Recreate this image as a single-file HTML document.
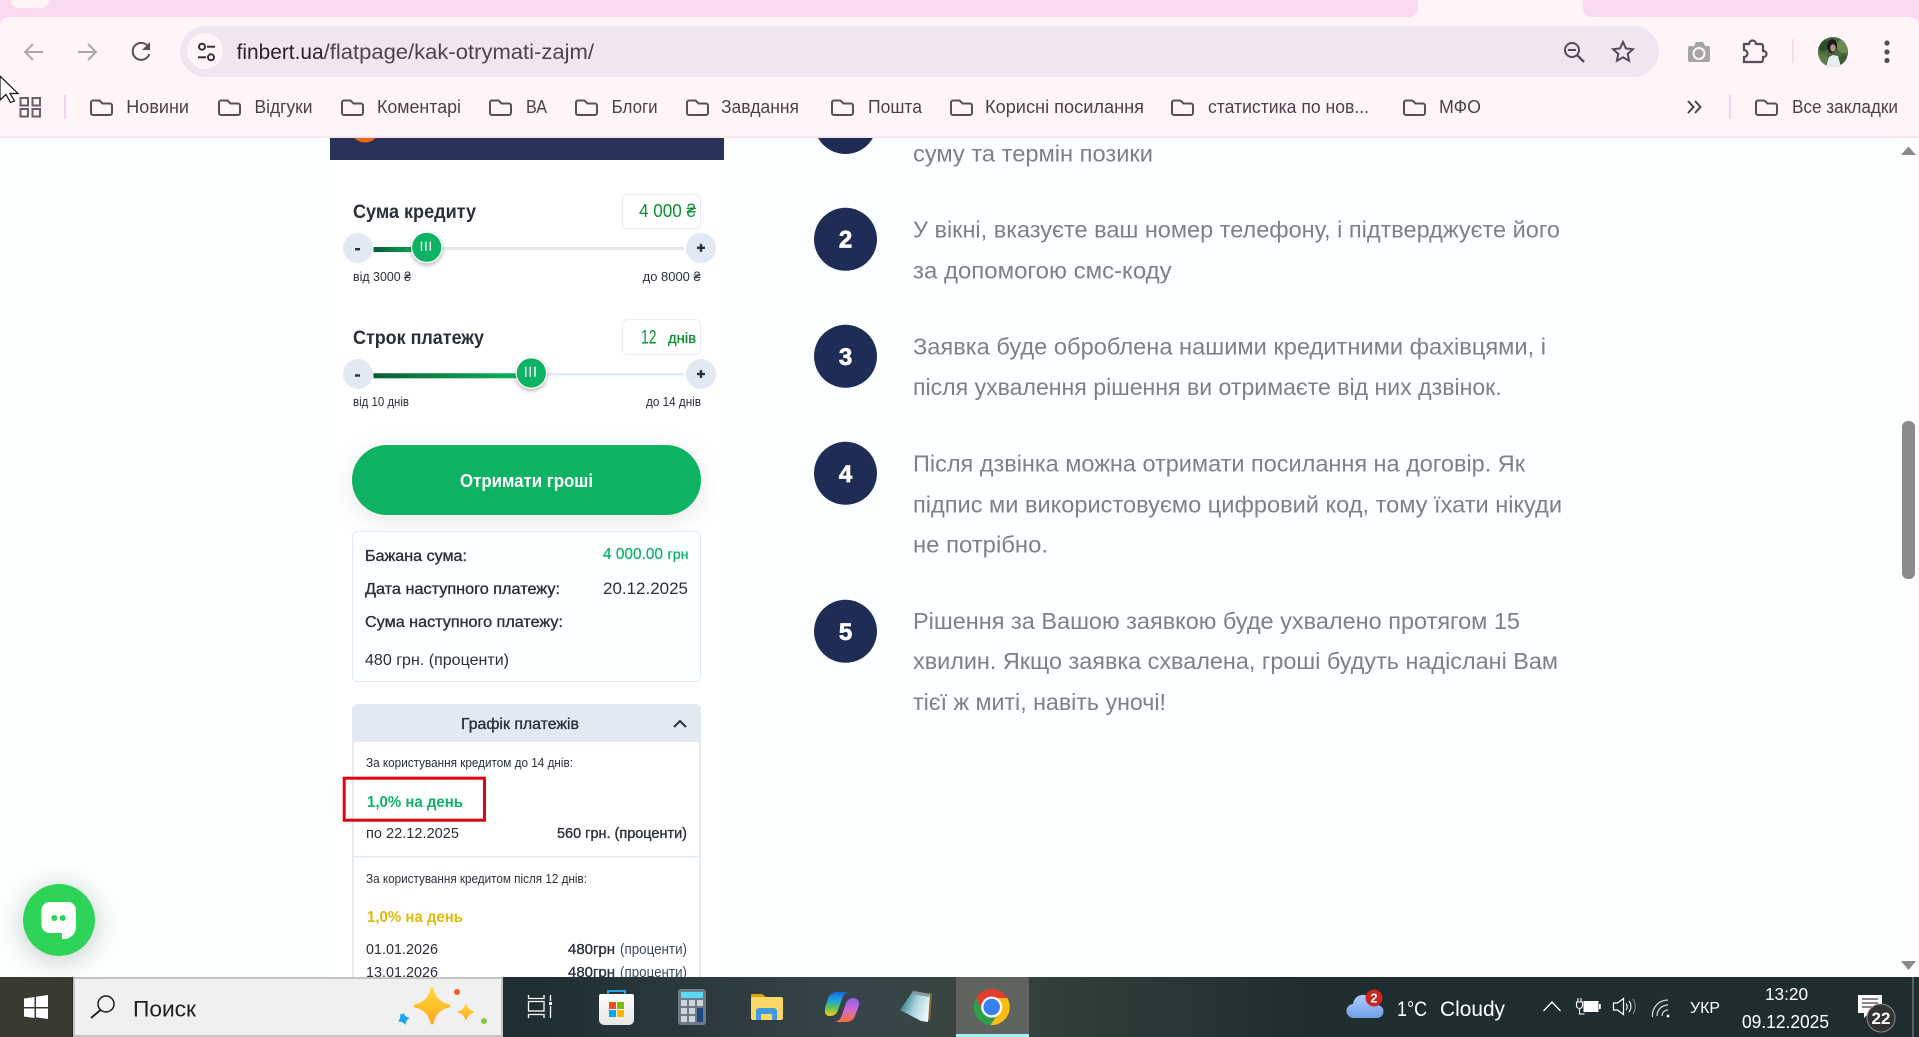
<!DOCTYPE html>
<html lang="uk">
<head>
<meta charset="utf-8">
<title>finbert.ua</title>
<style>
html,body{margin:0;padding:0;width:1919px;height:1037px;overflow:hidden;background:#fbffff}
svg{display:block;position:absolute;left:0;top:0}
text{font-family:"Liberation Sans","Noto Sans CJK SC",sans-serif;white-space:pre}
.b{font-weight:700}
.bm{font-size:18px;fill:#4a4048}
.p{font-size:23px;fill:#7c8088}
.d{fill:#2a2f3a}
.t{fill:#fff}
</style>
</head>
<body>
<svg width="1919" height="1037" viewBox="0 0 1919 1037" xmlns="http://www.w3.org/2000/svg">
<defs>
<filter id="sh1" x="-50%" y="-50%" width="200%" height="200%"><feDropShadow dx="0" dy="2" stdDeviation="2" flood-color="#000" flood-opacity=".3"/></filter>
<filter id="sh2" x="-20%" y="-60%" width="140%" height="220%"><feDropShadow dx="0" dy="6" stdDeviation="12" flood-color="#000" flood-opacity=".09"/></filter>
<filter id="sh3" x="-100%" y="-100%" width="300%" height="300%"><feDropShadow dx="0" dy="4" stdDeviation="14" flood-color="#000" flood-opacity=".22"/></filter>
<linearGradient id="gt" x1="0" x2="1" y1="0" y2="0"><stop offset="0" stop-color="#056030"/><stop offset="1" stop-color="#0cb362"/></linearGradient>
<linearGradient id="tb" x1="0" x2="1" y1="0" y2="0"><stop offset="0" stop-color="#1c2b2e"/><stop offset=".28" stop-color="#1f2e30"/><stop offset=".45" stop-color="#37454a"/><stop offset=".5" stop-color="#38453f"/><stop offset=".68" stop-color="#1f2d2f"/><stop offset="1" stop-color="#1f2d2e"/></linearGradient>
<linearGradient id="star" x1="0" x2="0" y1="0" y2="1"><stop offset="0" stop-color="#ffd83a"/><stop offset="1" stop-color="#fda91e"/></linearGradient>
<linearGradient id="cl" x1="0" x2="0" y1="0" y2="1"><stop offset="0" stop-color="#b0ccff"/><stop offset="1" stop-color="#6f9fe8"/></linearGradient>
<linearGradient id="co1" x1="0" x2="0" y1="0" y2="1"><stop offset="0" stop-color="#1565e0"/><stop offset=".35" stop-color="#19a8dd"/><stop offset=".65" stop-color="#5fc05a"/><stop offset="1" stop-color="#f4d418"/></linearGradient>
<linearGradient id="co2" x1="0" x2="0" y1="0" y2="1"><stop offset="0" stop-color="#8a5ee8"/><stop offset=".5" stop-color="#d56ad0"/><stop offset="1" stop-color="#f9703a"/></linearGradient>
<linearGradient id="np" x1="0" x2="1" y1=".3" y2=".7"><stop offset="0" stop-color="#1f6f80"/><stop offset=".5" stop-color="#a9d6de"/><stop offset="1" stop-color="#f5fbfb"/></linearGradient>
<linearGradient id="bag" x1="0" x2="0" y1="0" y2="1"><stop offset="0" stop-color="#ffffff"/><stop offset="1" stop-color="#e6e6e6"/></linearGradient>
<clipPath id="av"><circle cx="1833" cy="52" r="15"/></clipPath>
<path id="fo" d="M1 3.5a2 2 0 0 1 2-2h6.5l3 3H20a2 2 0 0 1 2 2V14a2 2 0 0 1-2 2H3a2 2 0 0 1-2-2z" fill="none" stroke="#5a4f58" stroke-width="2"/>
</defs>

<!-- page -->
<rect x="0" y="0" width="1919" height="1037" fill="#fbffff"/>
<rect x="1900" y="138" width="19" height="840" fill="#fdfdfd"/>
<rect x="330" y="138" width="394" height="840" fill="#fff"/>
<rect x="330" y="138" width="394" height="22" fill="#27335a"/>
<circle cx="365" cy="128" r="14.5" fill="#f9670f"/>

<!-- slider 1 -->
<text x="353" y="218" font-size="19" class="b d" textLength="123" lengthAdjust="spacingAndGlyphs">Сума кредиту</text>
<rect x="622.5" y="194.5" width="78" height="34" rx="5" fill="#fff" stroke="#e8eef4"/>
<text x="639" y="217" font-size="18" fill="#0a8f2f" textLength="57" lengthAdjust="spacingAndGlyphs">4 000 ₴</text>
<rect x="373" y="247" width="311" height="3" fill="#e2e9f3"/>
<rect x="373.5" y="247" width="50" height="5" fill="url(#gt)"/>
<circle cx="358" cy="248" r="15" fill="#e2e9f3"/><circle cx="701" cy="248" r="15" fill="#e2e9f3"/>
<rect x="355" y="248" width="5" height="2.4" class="d"/>
<rect x="697" y="246.6" width="8" height="2.4" class="d"/><rect x="699.8" y="243.8" width="2.4" height="8" class="d"/>
<circle cx="426.7" cy="247.3" r="15.2" fill="#0cb362" stroke="#fff" stroke-width="1.2" filter="url(#sh1)"/>
<path d="M421.5 241.7v9M425.9 241.7v9M430.3 241.7v9" stroke="#fff" stroke-width="1.4"/>
<text x="353" y="281" font-size="12.5" class="d" textLength="58" lengthAdjust="spacingAndGlyphs">від 3000 ₴</text>
<text x="642.7" y="281" font-size="12.5" class="d" textLength="58" lengthAdjust="spacingAndGlyphs">до 8000 ₴</text>

<!-- slider 2 -->
<text x="353" y="344" font-size="19" class="b d" textLength="131" lengthAdjust="spacingAndGlyphs">Строк платежу</text>
<rect x="622.5" y="319.5" width="78" height="35" rx="5" fill="#fff" stroke="#e8eef4"/>
<text x="641" y="343.5" font-size="19" fill="#0a8f2f" textLength="15.5" lengthAdjust="spacingAndGlyphs">12</text>
<text x="668" y="343" font-size="15" fill="#0a8f2f" textLength="28" lengthAdjust="spacingAndGlyphs" style="stroke:#0a8f2f;stroke-width:.3">днів</text>
<rect x="373" y="373" width="311" height="2.4" fill="#e2e9f3"/>
<rect x="373.5" y="373.3" width="145" height="5" fill="url(#gt)"/>
<circle cx="358" cy="374" r="15" fill="#e2e9f3"/><circle cx="701" cy="374" r="15" fill="#e2e9f3"/>
<rect x="355" y="374.3" width="5" height="2.4" class="d"/>
<rect x="697" y="372.8" width="8" height="2.4" class="d"/><rect x="699.8" y="370" width="2.4" height="8" class="d"/>
<circle cx="531.3" cy="373" r="15.2" fill="#0cb362" stroke="#fff" stroke-width="1.2" filter="url(#sh1)"/>
<path d="M525.7 366.7v10M530.3 366.7v10M535 366.7v10" stroke="#fff" stroke-width="1.4"/>
<text x="353" y="406" font-size="12.5" class="d" textLength="56" lengthAdjust="spacingAndGlyphs">від 10 днів</text>
<text x="646" y="406" font-size="12.5" class="d" textLength="55" lengthAdjust="spacingAndGlyphs">до 14 днів</text>

<!-- button -->
<rect x="352" y="445" width="349" height="70" rx="35" fill="#0cb362" filter="url(#sh2)"/>
<text x="460" y="487" font-size="18" class="b t" textLength="133" lengthAdjust="spacingAndGlyphs">Отримати гроші</text>

<!-- info box -->
<rect x="352.5" y="531.5" width="348" height="150" rx="5" fill="#fbffff" stroke="#e2e9f3"/>
<text x="365" y="561" font-size="15.5" class="d" textLength="102" lengthAdjust="spacingAndGlyphs" style="stroke:#2a2f3a;stroke-width:.35">Бажана сума:</text>
<text x="603" y="559" font-size="15.5" fill="#0cb362" textLength="60" lengthAdjust="spacingAndGlyphs" style="stroke:#0cb362;stroke-width:.2">4 000.00</text>
<text x="667.5" y="559" font-size="14" fill="#0cb362" textLength="21" lengthAdjust="spacingAndGlyphs" style="stroke:#0cb362;stroke-width:.3">грн</text>
<text x="365" y="594" font-size="15.5" class="d" textLength="195" lengthAdjust="spacingAndGlyphs" style="stroke:#2a2f3a;stroke-width:.35">Дата наступного платежу:</text>
<text x="603" y="594" font-size="16.5" class="d" textLength="85" lengthAdjust="spacingAndGlyphs">20.12.2025</text>
<text x="365" y="627" font-size="15.5" class="d" textLength="198" lengthAdjust="spacingAndGlyphs" style="stroke:#2a2f3a;stroke-width:.35">Сума наступного платежу:</text>
<text x="365" y="665" font-size="16" class="d" textLength="144" lengthAdjust="spacingAndGlyphs">480 грн. (проценти)</text>

<!-- schedule -->
<path d="M353 978V709a5 5 0 0 1 5-5h337a5 5 0 0 1 5 5v269z" fill="#fff"/>
<path d="M352 742V709a5 5 0 0 1 5-5h339a5 5 0 0 1 5 5v33z" fill="#e2e9f3"/>
<rect x="352" y="742" width="2" height="236" fill="#e2e9f3"/><rect x="699" y="742" width="2" height="236" fill="#e2e9f3"/>
<text x="461" y="729" font-size="16" class="d" textLength="118" lengthAdjust="spacingAndGlyphs" style="stroke:#2a2f3a;stroke-width:.35">Графік платежів</text>
<path d="M674 727l6-6 6 6" fill="none" stroke="#2a2f3a" stroke-width="2"/>
<text x="366" y="767" font-size="12.5" class="d" textLength="207" lengthAdjust="spacingAndGlyphs">За користування кредитом до 14 днів:</text>
<text x="367" y="807" font-size="15.5" class="b" fill="#0cb362" textLength="96" lengthAdjust="spacingAndGlyphs">1,0% на день</text>
<rect x="344.2" y="778.2" width="140.3" height="42" fill="none" stroke="#e0040f" stroke-width="3"/>
<text x="366" y="838" font-size="15" class="d" textLength="93" lengthAdjust="spacingAndGlyphs">по 22.12.2025</text>
<text x="557" y="838" font-size="15" class="d" textLength="130" lengthAdjust="spacingAndGlyphs" style="stroke:#2a2f3a;stroke-width:.35">560 грн. (проценти)</text>
<rect x="354" y="856" width="345" height="1.4" fill="#e2e9f3"/>
<text x="366" y="883" font-size="12.5" class="d" textLength="221" lengthAdjust="spacingAndGlyphs">За користування кредитом після 12 днів:</text>
<text x="367" y="922" font-size="15.5" class="b" fill="#e0b90b" textLength="96" lengthAdjust="spacingAndGlyphs">1,0% на день</text>
<text x="366" y="954" font-size="15" class="d" textLength="72" lengthAdjust="spacingAndGlyphs">01.01.2026</text>
<text x="568" y="954" font-size="15" class="d" textLength="47" lengthAdjust="spacingAndGlyphs" style="stroke:#2a2f3a;stroke-width:.35">480грн</text>
<text x="620" y="954" font-size="14.5" fill="#3a4a5e" textLength="67" lengthAdjust="spacingAndGlyphs">(проценти)</text>
<text x="366" y="977" font-size="15" class="d" textLength="72" lengthAdjust="spacingAndGlyphs">13.01.2026</text>
<text x="568" y="977" font-size="15" class="d" textLength="47" lengthAdjust="spacingAndGlyphs" style="stroke:#2a2f3a;stroke-width:.35">480грн</text>
<text x="620" y="977" font-size="14.5" fill="#3a4a5e" textLength="67" lengthAdjust="spacingAndGlyphs">(проценти)</text>

<!-- steps -->
<g fill="#1f2c56">
<circle cx="845.5" cy="122.5" r="31.5"/><circle cx="845.5" cy="239.3" r="31.5"/><circle cx="845.5" cy="356.3" r="31.5"/><circle cx="845.5" cy="473.3" r="31.5"/><circle cx="845.5" cy="631.3" r="31.5"/>
</g>
<g font-size="24" text-anchor="middle" style="stroke:#fff;stroke-width:.7">
<text x="845.5" y="247.7" class="b t">2</text><text x="845.5" y="365" class="b t">3</text><text x="845.5" y="481.9" class="b t">4</text><text x="845.5" y="640" class="b t">5</text>
</g>
<text x="913" y="161.7" class="p" textLength="240" lengthAdjust="spacingAndGlyphs">суму та термін позики</text>
<text x="913" y="237.3" class="p" textLength="647" lengthAdjust="spacingAndGlyphs">У вікні, вказуєте ваш номер телефону, і підтверджуєте його</text>
<text x="913" y="278.3" class="p" textLength="258.6" lengthAdjust="spacingAndGlyphs">за допомогою смс-коду</text>
<text x="913" y="354.3" class="p" textLength="633" lengthAdjust="spacingAndGlyphs">Заявка буде оброблена нашими кредитними фахівцями, і</text>
<text x="913" y="395" class="p" textLength="588.7" lengthAdjust="spacingAndGlyphs">після ухвалення рішення ви отримаєте від них дзвінок.</text>
<text x="913" y="471.7" class="p" textLength="612" lengthAdjust="spacingAndGlyphs">Після дзвінка можна отримати посилання на договір. Як</text>
<text x="913" y="512.3" class="p" textLength="649" lengthAdjust="spacingAndGlyphs">підпис ми використовуємо цифровий код, тому їхати нікуди</text>
<text x="913" y="552.3" class="p" textLength="135" lengthAdjust="spacingAndGlyphs">не потрібно.</text>
<text x="913" y="629" class="p" textLength="607" lengthAdjust="spacingAndGlyphs">Рішення за Вашою заявкою буде ухвалено протягом 15</text>
<text x="913" y="669" class="p" textLength="645" lengthAdjust="spacingAndGlyphs">хвилин. Якщо заявка схвалена, гроші будуть надіслані Вам</text>
<text x="913" y="710" class="p" textLength="253" lengthAdjust="spacingAndGlyphs">тієї ж миті, навіть уночі!</text>

<!-- chat -->
<circle cx="59" cy="920" r="36" fill="#2ed458" filter="url(#sh3)"/>
<path d="M49.5 902h18.5a8 8 0 0 1 8 8v17a12 12 0 0 1-12 12h-2v-6H49.5a8 8 0 0 1-8-8v-15a8 8 0 0 1 8-8z" fill="#fff"/>
<circle cx="54.3" cy="918" r="3" fill="#2ed458"/><circle cx="62.7" cy="918" r="3" fill="#2ed458"/>

<!-- scrollbar -->
<path d="M1901 155l7.5-8.5 7.5 8.5z" fill="#8a8a8a"/>
<rect x="1902" y="421" width="13" height="158" rx="6" fill="#8a8a8a"/>
<path d="M1901 961l7.5 9 7.5-9z" fill="#8a8a8a"/>

<!-- browser chrome -->
<rect x="0" y="0" width="1919" height="137" fill="#fff5f9"/>
<rect x="0" y="136.5" width="1919" height="1.5" fill="#f3e0ea"/>
<path d="M0 0H1418V7Q1418 17 1408 17H0Z" fill="#f8d9f0"/>
<path d="M1583 0H1919V17H1593Q1583 17 1583 7Z" fill="#f8d9f0"/>
<path d="M0 17H10Q0 17 0 27Z" fill="#f8d9f0"/><path d="M1919 17H1909Q1919 17 1919 27Z" fill="#f8d9f0"/>
<rect x="11" y="-10" width="38" height="18" rx="8" fill="#fff5f9"/>
<rect x="180" y="26" width="1479" height="51" rx="25.5" fill="#f0e6ef"/>
<circle cx="205" cy="51" r="18" fill="#fff5f9"/>
<g fill="none" stroke="#3a2f38" stroke-width="2">
<circle cx="202" cy="46.7" r="3"/><path d="M207 46.7h8"/><circle cx="211" cy="57.3" r="3"/><path d="M198 57.3h8"/>
</g>
<path d="M43 52H25M33 44l-8 8 8 8" fill="none" stroke="#aca7ab" stroke-width="2"/>
<path d="M78 52h18M88 44l8 8-8 8" fill="none" stroke="#aca7ab" stroke-width="2"/>
<path d="M148.5 47a8.5 8.5 0 1 0 .8 7" fill="none" stroke="#5a4a58" stroke-width="2"/>
<path d="M150 42v8h-8z" fill="#5a4a58"/>
<text x="236.6" y="59" font-size="21" fill="#2a2428" textLength="87" lengthAdjust="spacingAndGlyphs">finbert.ua</text>
<text x="323.6" y="59" font-size="21" fill="#4c454e" textLength="270.4" lengthAdjust="spacingAndGlyphs">/flatpage/kak-otrymati-zajm/</text>
<g fill="none" stroke="#5a4a58" stroke-width="2">
<circle cx="1572" cy="50" r="7"/><path d="M1577 55l7 7" stroke-width="2.4"/><path d="M1568 50h8"/>
<path d="M1623 42l2.9 6.4 7 .8-5.2 4.7 1.4 6.9-6.1-3.5-6.1 3.5 1.4-6.9-5.2-4.7 7-.8z"/>
<path d="M1744 44h5a3.500 3.500 0 0 1 7 0h5a2 2 0 0 1 2 2v5h.5a3 3 0 0 1 0 6H1763v3a2 2 0 0 1-2 2h-17v-5a3.500 3.500 0 0 0 0-7v-4a2 2 0 0 1 0-2z" stroke-width="2.2"/>
</g>
<path d="M1690 46h4l2-4h7l2 4h3a2 2 0 0 1 2 2v12a2 2 0 0 1-2 2h-18a2 2 0 0 1-2-2V48a2 2 0 0 1 2-2z" fill="#a5a5a5"/>
<circle cx="1699" cy="53.5" r="5.5" fill="none" stroke="#fff5f9" stroke-width="2"/>
<rect x="1792" y="39" width="2" height="24" fill="#f8d9f0"/>
<g clip-path="url(#av)">
<rect x="1818" y="37" width="30" height="30" fill="#4a6a3e"/>
<circle cx="1823" cy="45" r="6" fill="#2f4d2a"/><circle cx="1844" cy="46" r="7" fill="#6c8c56"/><circle cx="1822" cy="60" r="6" fill="#5c7c4a"/><circle cx="1843" cy="60" r="5" fill="#3d5a35"/>
<path d="M1826 67l3-10 4-2 5 1 3 11z" fill="#e6eef0"/>
<ellipse cx="1832" cy="46" rx="5" ry="7" fill="#1f1a1c"/>
<ellipse cx="1833" cy="48" rx="2.800" ry="3.800" fill="#b89080"/>
</g>
<circle cx="1887" cy="43" r="2.6" fill="#5a4a58"/><circle cx="1887" cy="52" r="2.6" fill="#5a4a58"/><circle cx="1887" cy="60.5" r="2.6" fill="#5a4a58"/>

<!-- bookmarks -->
<g fill="none" stroke="#6a5f68" stroke-width="2">
<rect x="20.5" y="98" width="7.5" height="7.5"/><rect x="32.5" y="98" width="7.5" height="7.5"/><rect x="20.5" y="109" width="7.5" height="7.5"/><rect x="32.5" y="109" width="7.5" height="7.5"/>
</g>
<rect x="64" y="95" width="2" height="24" fill="#f8d0ee"/>
<use href="#fo" x="90" y="99"/><text x="126.3" y="113" class="bm" textLength="62.7" lengthAdjust="spacingAndGlyphs">Новини</text>
<use href="#fo" x="218" y="99"/><text x="254.5" y="113" class="bm" textLength="58" lengthAdjust="spacingAndGlyphs">Відгуки</text>
<use href="#fo" x="341" y="99"/><text x="377" y="113" class="bm" textLength="84" lengthAdjust="spacingAndGlyphs">Коментарі</text>
<use href="#fo" x="489" y="99"/><text x="526" y="113" class="bm" textLength="21" lengthAdjust="spacingAndGlyphs">ВА</text>
<use href="#fo" x="575" y="99"/><text x="611.6" y="113" class="bm" textLength="46" lengthAdjust="spacingAndGlyphs">Блоги</text>
<use href="#fo" x="686" y="99"/><text x="721" y="113" class="bm" textLength="78" lengthAdjust="spacingAndGlyphs">Завдання</text>
<use href="#fo" x="831" y="99"/><text x="868" y="113" class="bm" textLength="54" lengthAdjust="spacingAndGlyphs">Пошта</text>
<use href="#fo" x="950" y="99"/><text x="985" y="113" class="bm" textLength="159" lengthAdjust="spacingAndGlyphs">Корисні посилання</text>
<use href="#fo" x="1171" y="99"/><text x="1208" y="113" class="bm" textLength="161" lengthAdjust="spacingAndGlyphs">статистика по нов...</text>
<use href="#fo" x="1403" y="99"/><text x="1439" y="113" class="bm" textLength="42" lengthAdjust="spacingAndGlyphs">МФО</text>
<path d="M1688 101l5.5 6-5.5 6M1695 101l5.5 6-5.5 6" fill="none" stroke="#4a4048" stroke-width="2"/>
<rect x="1729" y="95" width="2" height="24" fill="#f8d0ee"/>
<use href="#fo" x="1755" y="99"/><text x="1792" y="113" class="bm" textLength="106" lengthAdjust="spacingAndGlyphs">Все закладки</text>

<!-- cursor -->
<path d="M0 76L18 93.5H10L14.5 101 10.5 102.5 6 94.5 0 100Z" fill="#fff" stroke="#111" stroke-width="1.2"/>

<!-- taskbar -->
<rect x="0" y="977" width="1919" height="60" fill="url(#tb)"/>
<rect x="0" y="977" width="72" height="60" fill="#3a3a33"/>
<rect x="73" y="977" width="430" height="60" fill="#c4c4c4"/>
<rect x="75" y="979" width="426" height="56" fill="#f0f0f0"/>
<path d="M24 998.5l10.5-1.500v10H24zM36 996.800L48 995v12H36zM24 1008.500h10.500v9.500L24 1016.500zM36 1008.500h12V1019l-12-1.800z" fill="#fff"/>
<circle cx="106" cy="1004" r="8" fill="none" stroke="#1a1a1a" stroke-width="1.5"/>
<path d="M100.500 1010L91 1018" stroke="#1a1a1a" stroke-width="1.8"/>
<text x="133" y="1016.7" font-size="22" fill="#1f1f1f" textLength="63" lengthAdjust="spacingAndGlyphs">Поиск</text>
<path d="M432 989Q435 1003 449 1006Q435 1009 432 1023Q429 1009 415 1006Q429 1003 432 989Z" fill="url(#star)" stroke="url(#star)" stroke-width="3" stroke-linejoin="round"/>
<path d="M466 1004Q467.500 1010.500 474 1012Q467.500 1013.500 466 1020Q464.500 1013.500 458 1012Q464.500 1010.500 466 1004Z" fill="url(#star)" stroke="url(#star)"/>
<path d="M404 1013Q404.500 1017 410 1018Q405.500 1020 405.500 1025Q402.500 1021 398 1021.500Q401 1018 400 1014Q402 1015 404 1013Z" fill="#1ea7f0"/>
<circle cx="457" cy="992" r="3" fill="#f2592a"/><circle cx="484" cy="1021" r="3" fill="#8cc63f"/>
<!-- task view -->
<g fill="none" stroke="#fff" stroke-width="1.3">
<path d="M528.500 995v3.500h15.500V995"/><rect x="528.500" y="1001.500" width="15.500" height="9.500"/><path d="M528.500 1018v-3.500h15.500v3.500"/><path d="M550.500 995v6M550.500 1006v12"/>
</g>
<rect x="549" y="1002" width="3" height="3" fill="#fff"/>
<!-- store -->
<path d="M608 997v-6h17v6" fill="none" stroke="#21a4e8" stroke-width="2"/>
<path d="M599 996a2 2 0 0 1 2-2h31a2 2 0 0 1 2 2v24a5 5 0 0 1-5 5h-25a5 5 0 0 1-5-5z" fill="url(#bag)"/>
<rect x="609" y="1002" width="7" height="7" fill="#f25022"/><rect x="617" y="1002" width="7" height="7" fill="#7fba00"/><rect x="609" y="1010" width="7" height="7" fill="#00a4ef"/><rect x="617" y="1010" width="7" height="7" fill="#ffb900"/>
<!-- calculator -->
<rect x="678" y="989" width="28" height="36" rx="3" fill="#6f7c88"/>
<rect x="681" y="992" width="22" height="6" fill="#5ad8f5"/>
<g fill="#cfd4da">
<rect x="681" y="1000" width="6" height="6"/><rect x="689" y="1000" width="6" height="6"/><rect x="697" y="1000" width="6" height="6"/>
<rect x="681" y="1008" width="6" height="6"/><rect x="689" y="1008" width="6" height="6"/>
<rect x="681" y="1016" width="6" height="6"/><rect x="689" y="1016" width="6" height="6"/>
</g>
<rect x="697" y="1008" width="6" height="14" fill="#1a4a8a"/>
<!-- explorer -->
<path d="M751 1000v-5a1 1 0 0 1 1-1h10l4 3v3z" fill="#d9a20a"/>
<path d="M751 999a2 2 0 0 1 2-2h28a2 2 0 0 1 2 2v19a2 2 0 0 1-2 2h-28a2 2 0 0 1-2-2z" fill="#fbd769"/>
<path d="M756 1020v-9a3 3 0 0 1 3-3h15a3 3 0 0 1 3 3v9h-5v-6h-11v6z" fill="#3f9ae0"/>
<!-- copilot -->
<path d="M837 992h13q-6 0-8 7l-4 11q-2 6-8 6-6 0-5-7 0-3 2-7 2-10 10-10z" fill="url(#co1)"/>
<path d="M846 1022h-11q5-1 7-7l4-12q2-5 8-5 6 1 5 7-1 3-3 8-2 9-10 9z" fill="url(#co2)"/>
<!-- notepad -->
<path d="M929 993l3 1-2 27-3-2z" fill="#8a6a2a"/>
<path d="M913 991l17 3-2 28-7-1-21-11z" fill="url(#np)"/>
<path d="M913 991l17 3-1 3-17-3z" fill="#8d989c"/>
<!-- chrome -->
<rect x="956" y="977" width="73" height="60" fill="#5e635d"/>
<rect x="956" y="1034" width="73" height="3" fill="#a8f0f5"/>
<circle cx="991.7" cy="1007" r="18" fill="#2e9e48"/>
<path d="M1007.300 998A18 18 0 0 1 990.500 1025L1000.700 1010 991.700 998Z" fill="#f9bd14"/>
<path d="M976.100 998A18 18 0 0 1 1007.300 998H991.700L983 1011Z" fill="#e33b2e"/>
<circle cx="991.7" cy="1007" r="10.5" fill="#fff"/><circle cx="991.7" cy="1007" r="8.3" fill="#3a7ff0"/>

<!-- tray -->
<path d="M1354 1018a7 7 0 0 1-1-14 10 10 0 0 1 18-5 8 8 0 0 1 6 6 6.500 6.500 0 0 1 0 13z" fill="url(#cl)"/>
<circle cx="1374" cy="998" r="8.5" fill="#c8281e"/>
<text x="1374" y="1002.500" font-size="12.5" class="b t" text-anchor="middle">2</text>
<text x="1397" y="1016" font-size="21" class="t" textLength="30" lengthAdjust="spacingAndGlyphs">1°C</text>
<text x="1440" y="1016" font-size="21" class="t" textLength="65" lengthAdjust="spacingAndGlyphs">Cloudy</text>
<path d="M1543.500 1011l8.500-9 8.500 9" fill="none" stroke="#fff" stroke-width="1.3"/>
<path d="M1578 998v4M1581 998v4M1576.500 1002h6v3.500a3 3 0 0 1-6 0zM1579.500 1009v5h5" fill="none" stroke="#fff" stroke-width="1.1"/>
<rect x="1584" y="1001.500" width="14" height="10" fill="#fff" stroke="#fff"/>
<rect x="1599" y="1004" width="1.8" height="5" fill="#fff"/>
<path d="M1613.500 1003h4l6-4.500v16l-6-4.500h-4z" fill="none" stroke="#fff" stroke-width="1.2"/>
<path d="M1626 1003.500a5 5 0 0 1 0 6.500M1629 1001a9 9 0 0 1 0 11" fill="none" stroke="#fff" stroke-width="1.1"/>
<path d="M1633 999a14 14 0 0 1 0 15" fill="none" stroke="#8a9494" stroke-width="1"/>
<path d="M1662 1016a6 6 0 0 1 6-6M1657 1016a11 11 0 0 1 11-11M1652.500 1017a15.500 15.500 0 0 1 15.500-17" fill="none" stroke="#d8dede" stroke-width="1.2"/>
<circle cx="1668" cy="1016" r="1.4" fill="#fff"/>
<text x="1690" y="1013" font-size="16" class="t" textLength="30" lengthAdjust="spacingAndGlyphs">УКР</text>
<text x="1765" y="1000" font-size="17.5" class="t" textLength="43" lengthAdjust="spacingAndGlyphs">13:20</text>
<text x="1742" y="1028" font-size="18" class="t" textLength="87" lengthAdjust="spacingAndGlyphs">09.12.2025</text>
<rect x="1858" y="995" width="24" height="18" fill="#fff"/>
<path d="M1862 999h16M1862 1003h16M1862 1007h11" stroke="#444" stroke-width="1.3"/>
<path d="M1864 1013v5l5-5z" fill="#fff"/>
<circle cx="1881" cy="1018" r="14" fill="#333" stroke="#8a8a8a" stroke-width="1"/>
<text x="1881" y="1024" font-size="17" class="b t" text-anchor="middle">22</text>
<rect x="1912" y="977" width="2" height="60" fill="#566262"/>
</svg>
</body>
</html>
